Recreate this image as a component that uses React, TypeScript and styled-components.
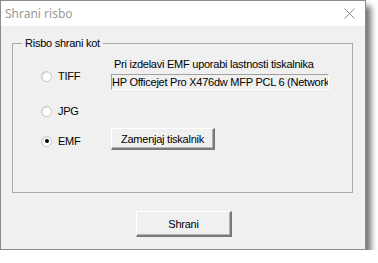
import React from "react";
import styled, { createGlobalStyle } from "styled-components";

const Global = createGlobalStyle`
  html, body { margin: 0; padding: 0; background: #ffffff; }
  body { font-family: "Liberation Sans", Arial, sans-serif; }
`;

const Window = styled.div`
  width: 364px;
  height: 248px;
  border: 1px solid #8c8c8c;
  background: #f0f0f0;
  box-shadow: 5px 6px 6px rgba(0, 0, 0, 0.55);
  display: flex;
  flex-direction: column;
`;

const TitleBar = styled.div`
  height: 25px;
  background: #ffffff;
  display: flex;
  align-items: center;
  justify-content: space-between;
  padding: 0 10px 0 4px;
`;

const Title = styled.span`
  font-family: "Noto Sans", "Open Sans", sans-serif;
  font-size: 12px;
  color: #9a9a9a;
`;

const Body = styled.div`
  flex: 1;
  display: flex;
  flex-direction: column;
  padding: 11px 12px 0 11px;
  font-size: 11px;
  letter-spacing: -0.25px;
  color: #000;
`;

const Group = styled.fieldset`
  margin: 0;
  padding: 0;
  height: 156px;
  border: 1px solid #a9a9a9;
  display: flex;
  box-sizing: border-box;
`;

const Legend = styled.legend`
  margin-left: 9px;
  padding: 0 3px;
  font-size: 11px;
  line-height: 13px;
`;

const RadioColumn = styled.div`
  width: 98px;
  display: flex;
  flex-direction: column;
  padding: 19px 0 0 28px;
  box-sizing: border-box;
`;

const RadioRow = styled.label<{ $gap: number }>`
  display: flex;
  align-items: center;
  gap: 6px;
  height: 14px;
  margin-bottom: ${(p) => p.$gap}px;
`;

const RadioDot = styled.span<{ $on?: boolean }>`
  width: 11px;
  height: 11px;
  border-radius: 50%;
  box-sizing: border-box;
  background: #ffffff;
  border: 1px solid #c4c4c4;
  box-shadow: inset 1px 1px 0 #e4e4e4;
  display: flex;
  align-items: center;
  justify-content: center;
  &::after {
    content: "";
    width: 4px;
    height: 4px;
    border-radius: 50%;
    background: ${(p) => (p.$on ? "#000" : "transparent")};
  }
`;

const RightColumn = styled.div`
  display: flex;
  flex-direction: column;
  padding-top: 8px;
`;

const Caption = styled.div`
  padding-left: 3px;
  height: 13px;
  line-height: 13px;
`;

const Field = styled.div`
  margin-top: 3px;
  width: 218px;
  height: 16px;
  box-sizing: border-box;
  border-top: 1px solid #a0a0a0;
  border-left: 1px solid #a0a0a0;
  border-right: 1px solid #ffffff;
  border-bottom: 1px solid #ffffff;
  overflow: hidden;
  white-space: nowrap;
  line-height: 14px;
`;

const Button = styled.button<{ $w: number; $h: number }>`
  width: ${(p) => p.$w}px;
  height: ${(p) => p.$h}px;
  font-family: "Liberation Sans", Arial, sans-serif;
  font-size: 11px;
  letter-spacing: -0.25px;
  color: #000;
  background: #f0f0f0;
  padding: 0;
  border-style: solid;
  border-width: 1px 2px 2px 1px;
  border-color: #ffffff #7a7a7a #7a7a7a #ffffff;
  box-shadow: inset -1px -1px 0 #b5b5b5;
`;

const ChangeButton = styled(Button)`
  margin-top: 38px;
`;

const Footer = styled.div`
  display: flex;
  padding: 18px 0 0 124px;
`;

const CloseIcon = () => (
  <svg width="11" height="11" viewBox="0 0 11 11">
    <path d="M0.5 0.5 L10.5 10.5 M10.5 0.5 L0.5 10.5" stroke="#8a8a8a" strokeWidth="1" />
  </svg>
);

export default function App() {
  return (
    <>
      <Global />
      <Window>
        <TitleBar>
          <Title>Shrani risbo</Title>
          <CloseIcon />
        </TitleBar>
        <Body>
          <Group>
            <Legend>Risbo shrani kot</Legend>
            <RadioColumn>
              <RadioRow $gap={21}>
                <RadioDot />
                TIFF
              </RadioRow>
              <RadioRow $gap={16}>
                <RadioDot />
                JPG
              </RadioRow>
              <RadioRow $gap={0}>
                <RadioDot $on />
                EMF
              </RadioRow>
            </RadioColumn>
            <RightColumn>
              <Caption>Pri izdelavi EMF uporabi lastnosti tiskalnika</Caption>
              <Field>HP Officejet Pro X476dw MFP PCL 6 (Network</Field>
              <ChangeButton $w={104} $h={22}>Zamenjaj tiskalnik</ChangeButton>
            </RightColumn>
          </Group>
          <Footer>
            <Button $w={96} $h={26}>Shrani</Button>
          </Footer>
        </Body>
      </Window>
    </>
  );
}
